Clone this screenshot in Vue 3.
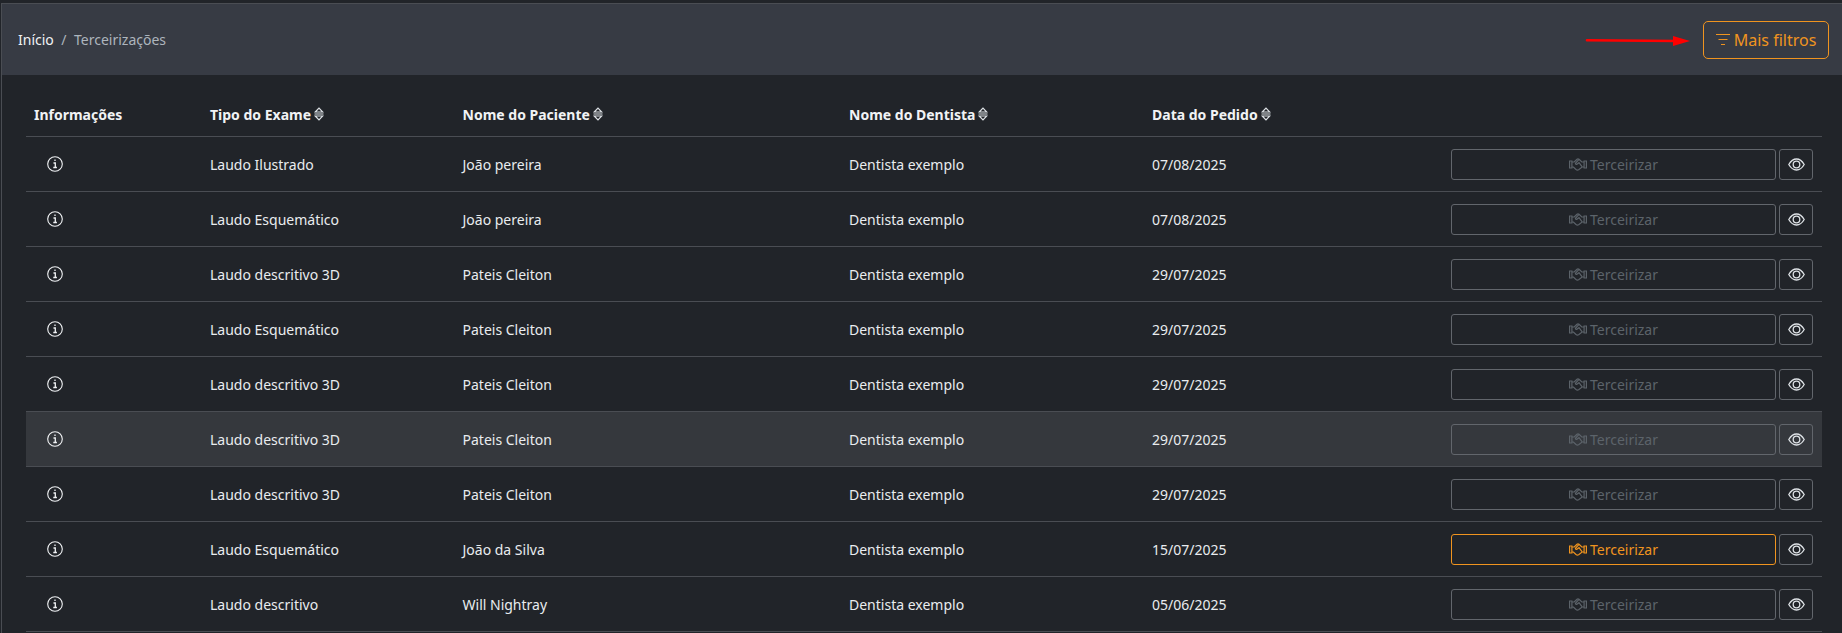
<script setup>
const rows = [
  ['Laudo Ilustrado', 'João pereira', '07/08/2025', false, false],
  ['Laudo Esquemático', 'João pereira', '07/08/2025', false, false],
  ['Laudo descritivo 3D', 'Pateis Cleiton', '29/07/2025', false, false],
  ['Laudo Esquemático', 'Pateis Cleiton', '29/07/2025', false, false],
  ['Laudo descritivo 3D', 'Pateis Cleiton', '29/07/2025', false, false],
  ['Laudo descritivo 3D', 'Pateis Cleiton', '29/07/2025', false, true],
  ['Laudo descritivo 3D', 'Pateis Cleiton', '29/07/2025', false, false],
  ['Laudo Esquemático', 'João da Silva', '15/07/2025', true, false],
  ['Laudo descritivo', 'Will Nightray', '05/06/2025', false, false],
]
const cols = ['Tipo do Exame', 'Nome do Paciente', 'Nome do Dentista', 'Data do Pedido']
</script>

<template>
  <div class="page">
    <div class="card">
      <header class="head">
        <nav class="crumb"><span class="home">Início</span><span class="sep">/</span><span class="cur">Terceirizações</span></nav>
        <svg class="arrow" width="118" height="12" viewBox="0 0 118 12"><path d="M2 5.200 L92 6" stroke="#f00" stroke-width="2.600" stroke-linecap="round" fill="none"/><path d="M88 1 L105 6 L88 11 Z" fill="#f00"/></svg>
        <button class="more">
          <svg width="14" height="11" viewBox="0 0 14 11" fill="none" stroke="currentColor" stroke-width="1"><path d="M0 .5H14M2.500 5.500H11.500M5 10.500H9"/></svg>
          Mais filtros
        </button>
      </header>
      <div class="body">
        <div class="row top">
          <div class="info th">Informações</div>
          <div v-for="c in cols" :key="c" class="th">
            {{ c }}
            <svg class="sort" width="10" height="14" viewBox="0 0 10 14" fill="none" stroke="currentColor" stroke-width="1.200"><path d="M1.200 5 5 1 8.800 5ZM0.500 7H9.500M1.200 9 5 13 8.800 9Z"/></svg>
          </div>
        </div>
        <div v-for="(r, i) in rows" :key="i" class="row" :class="{ hover: r[4] }">
          <div class="info"><svg class="i" width="16" height="16" viewBox="0 0 16 16" fill="none"><circle cx="8" cy="8" r="7.300" stroke="currentColor" stroke-width="1.100"/><path d="M8 3.600v1.500M6.500 7H8.300V11.400M6.300 11.500H9.900" stroke="currentColor" stroke-width="1.300"/></svg></div>
          <div>{{ r[0] }}</div>
          <div>{{ r[1] }}</div>
          <div>Dentista exemplo</div>
          <div>{{ r[2] }}</div>
          <div class="acts">
            <button class="ter" :class="{ on: r[3] }">
              <svg width="18" height="13" viewBox="0 0 18 13" fill="none" stroke="currentColor" stroke-width="1.200"><path d="M.6 3h2.300v7H.6zM15.100 3h2.300v7h-2.300zM2.900 4H5.200L8 1.300c.6-.5 1.400-.5 2 0L12.800 4h2.300M2.900 9h1.500L7 11.500c.9.700 1.800.700 2.600.2l3.500-2.700h2M9.800 1.700 6.700 5c-.7.900.3 1.800 1.200 1.200L10 4.700l3 4"/></svg>
              Terceirizar
            </button>
            <button class="eye">
              <svg width="17" height="13" viewBox="0 0 17 13" fill="none" stroke="currentColor" stroke-width="1.300"><path d="M.8 6.500C2.800 3 5.400 1 8.500 1s5.700 2 7.700 5.500C14.200 10 11.600 12 8.500 12S2.800 10 .8 6.500Z"/><circle cx="8.500" cy="6.500" r="3.300"/></svg>
            </button>
          </div>
        </div>
      </div>
    </div>
  </div>
</template>

<style>
html, body { margin: 0; background: #212429; }
</style>

<style scoped>
.page {
  height: 633px;
  overflow: hidden;
  background: #212429;
  padding-top: 3px;
  box-sizing: border-box;
  font-family: "Noto Sans", sans-serif;
  font-size: 14px;
  color: #e9ecef;
}
.card {
  border-top: 1px solid #4a4d53;
  border-left: 1px solid #4a4d53;
  margin-left: 1px;
  height: 100%;
}
.head {
  height: 71px;
  background: #373b44;
  display: flex;
  align-items: center;
  padding: 0 13px 0 16px;
  position: relative;
}
.crumb { display: flex; gap: 7.500px; flex: 1; line-height: 20px; }
.home { color: #f1f3f5; }
.sep, .cur { color: #adb5bd; }
.arrow { position: absolute; left: 1583px; top: 31px; }
.more {
  width: 126px;
  height: 38px;
  padding: 0;
  background: transparent;
  border: 1px solid #f0941f;
  border-radius: 5px;
  color: #f0941f;
  font: 16px "Noto Sans", sans-serif;
  display: flex;
  align-items: center;
  justify-content: center;
  gap: 4px;
}
.body { padding: 0 20px 0 24px; }
.row {
  height: 55px;
  box-sizing: border-box;
  border-bottom: 1px solid #4a4d53;
  display: grid;
  grid-template-columns: 184px 252.500px 386.500px 303px 1fr auto;
  align-items: center;
}
.row.top {
  height: 62px;
  padding-top: 17px;
  grid-template-columns: 184px 252.500px 386.500px 303px 1fr;
}
.row.hover { background: #35383d; }
.info { padding-left: 8px; }
.th { font-weight: 700; color: #f1f3f5; display: flex; align-items: center; gap: 3px; }
.sort { color: #dee2e6; }
.i { margin-left: 13px; display: block; color: #f1f3f5; margin-top: -1px; }
.acts { grid-column: 6; display: flex; justify-content: flex-end; gap: 3px; padding-right: 9px; }
button { cursor: pointer; }
.ter {
  width: 325px;
  height: 31px;
  padding: 0;
  background: transparent;
  border: 1px solid #62666c;
  border-radius: 3px;
  color: #5c636a;
  font: 14px "Noto Sans", sans-serif;
  display: flex;
  align-items: center;
  justify-content: center;
  gap: 3px;
}
.ter.on { border-color: #f0941f; color: #f0941f; }
.eye {
  width: 34px;
  height: 31px;
  padding: 0;
  background: transparent;
  border: 1px solid #62666c;
  border-radius: 3px;
  color: #dee2e6;
  display: flex;
  align-items: center;
  justify-content: center;
}
</style>
